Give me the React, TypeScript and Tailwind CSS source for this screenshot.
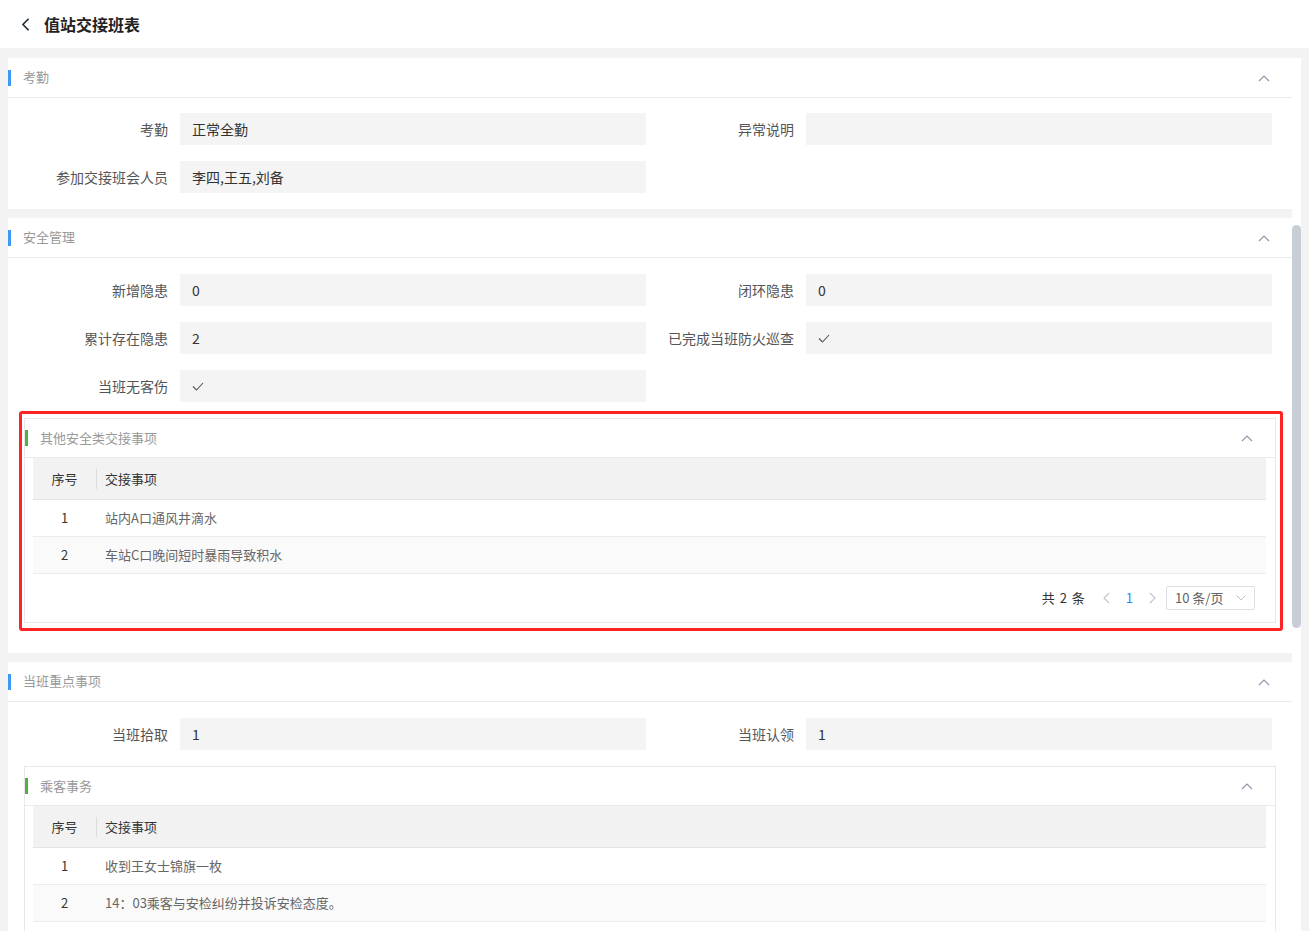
import { ChevronLeft } from "lucide-react";

type Field = { label: string; value?: string; check?: boolean };

function ChevronUp() {
  return (
    <svg width="12" height="8" viewBox="0 0 12 8" fill="none">
      <polyline points="1,7 6,2 11,7" stroke="#8e9aab" strokeWidth="1.2" />
    </svg>
  );
}

function Check() {
  return (
    <svg width="12" height="9" viewBox="0 0 12 9" fill="none">
      <polyline points="1,4.5 4.5,8 11,1" stroke="#555" strokeWidth="1.1" />
    </svg>
  );
}

function PagerArrow({ dir }: { dir: "left" | "right" }) {
  return (
    <svg width="8" height="12" viewBox="0 0 8 12" fill="none">
      <polyline
        points={dir === "left" ? "7,1 2,6 7,11" : "1,1 6,6 1,11"}
        stroke="#c0c4cc"
        strokeWidth="1.1"
      />
    </svg>
  );
}

// section header with accent bar
function SectionHead({ title, accent, sub }: { title: string; accent: "blue" | "green"; sub?: boolean }) {
  return (
    <div className={(sub ? "h-[39px]" : "h-10") + " flex items-center border-b border-[#e9ebf0] pr-[22px]"}>
      <div className={accent === "blue" ? "w-[3px] h-4 bg-[#3d98f5]" : "w-[3px] h-4 bg-[#52b043]"} />
      <div className="ml-3 text-[13px] text-[#999] flex-1 -mt-px">{title}</div>
      <ChevronUp />
    </div>
  );
}

function FormGrid({ fields }: { fields: Field[] }) {
  return (
    <div className="grid grid-cols-[160px_466px_136px_466px] gap-x-3 gap-y-4">
      {fields.map((f, i) => (
        <div key={i} className="contents">
          <div className="flex items-center justify-end text-sm text-[#555]">{f.label}</div>
          <div className="h-8 bg-[#f4f4f4] flex items-center px-3 text-sm text-[#333]">
            {f.check ? <Check /> : f.value}
          </div>
        </div>
      ))}
    </div>
  );
}

function SubCard({ title, rows, pager }: { title: string; rows: string[]; pager?: boolean }) {
  return (
    <div className="border border-[#e8e8e8] bg-white">
      <SectionHead title={title} accent="green" sub />
      <div className="pl-2 pr-[9px]">
        <div className="h-[42px] bg-[#f2f2f2] border-b border-[#e4e4e4] flex items-center text-[13px] text-[#333]">
          <div className="w-[63px] text-center">序号</div>
          <div className="w-px h-5 bg-[#dcdcdc]" />
          <div className="pl-2">交接事项</div>
        </div>
        {rows.map((r, i) => (
          <div
            key={i}
            className={
              "h-[37px] border-b border-[#ececec] flex items-center text-[13px] text-[#666] " +
              (i % 2 === 1 ? "bg-[#fafafa]" : "bg-white")
            }
          >
            <div className="w-[63px] text-center text-[#333]">{i + 1}</div>
            <div className="pl-[9px]">{r}</div>
          </div>
        ))}
        {pager ? (
          <div className="flex items-center justify-end h-12 pr-[11px] text-[13px]">
            <span className="text-[#333] tracking-[1px]">共 {rows.length} 条</span>
            <span className="ml-4"><PagerArrow dir="left" /></span>
            <span className="ml-4 text-[#1890ff]">1</span>
            <span className="ml-4"><PagerArrow dir="right" /></span>
            <div className="ml-[9px] w-[89px] h-6 border border-[#dcdfe6] rounded-[2px] flex items-center px-2 text-[#606266]">
              <span className="flex-1">10 条/页</span>
              <svg width="10" height="6" viewBox="0 0 10 6" fill="none">
                <polyline points="0.5,0.5 5,5 9.5,0.5" stroke="#c0c4cc" strokeWidth="1" />
              </svg>
            </div>
          </div>
        ) : (
          <div className="h-12" />
        )}
      </div>
    </div>
  );
}

export default function App() {
  return (
    <div className="h-screen flex flex-col bg-[#f3f3f3] font-['Noto_Sans_CJK_SC','Liberation_Sans',sans-serif] overflow-hidden">
      <div className="h-12 bg-white flex items-center pl-[15px] shrink-0">
        <ChevronLeft size={21} strokeWidth={2} className="text-[#1f2d3d]" />
        <div className="ml-[8px] text-base font-bold text-[#222]">值站交接班表</div>
      </div>

      <div className="flex-1 flex min-h-0 pt-[10px] pl-2 pr-2">
        <div className="flex-1 flex flex-col gap-[9px] overflow-hidden">
          {/* 考勤 */}
          <div className="bg-white shrink-0">
            <SectionHead title="考勤" accent="blue" />
            <div className="pt-[15px] pb-4">
              <FormGrid
                fields={[
                  { label: "考勤", value: "正常全勤" },
                  { label: "异常说明", value: "" },
                  { label: "参加交接班会人员", value: "李四,王五,刘备" },
                ]}
              />
            </div>
          </div>

          {/* 安全管理 */}
          <div className="bg-white shrink-0">
            <SectionHead title="安全管理" accent="blue" />
            <div className="pt-4 pb-[22px]">
              <FormGrid
                fields={[
                  { label: "新增隐患", value: "0" },
                  { label: "闭环隐患", value: "0" },
                  { label: "累计存在隐患", value: "2" },
                  { label: "已完成当班防火巡查", check: true },
                  { label: "当班无客伤", check: true },
                ]}
              />
              <div className="mt-[9px] ml-[11px] mr-[9px] border-[3px] border-[#ff2424] rounded-[3px] pt-1 pb-[5px] pl-[2px] pr-1">
                <SubCard title="其他安全类交接事项" rows={["站内A口通风井滴水", "车站C口晚间短时暴雨导致积水"]} pager />
              </div>
            </div>
          </div>

          {/* 当班重点事项 */}
          <div className="bg-white shrink-0">
            <SectionHead title="当班重点事项" accent="blue" />
            <div className="pt-4 pb-4">
              <FormGrid
                fields={[
                  { label: "当班拾取", value: "1" },
                  { label: "当班认领", value: "1" },
                ]}
              />
              <div className="mt-4 ml-4 mr-4">
                <SubCard title="乘客事务" rows={["收到王女士锦旗一枚", "14：03乘客与安检纠纷并投诉安检态度。"]} />
              </div>
            </div>
          </div>
        </div>

        {/* scrollbar */}
        <div className="w-[9px] bg-white shrink-0">
          <div className="mt-[167px] h-[403px] w-full rounded-full bg-[#c7ced6]" />
        </div>
      </div>
    </div>
  );
}
